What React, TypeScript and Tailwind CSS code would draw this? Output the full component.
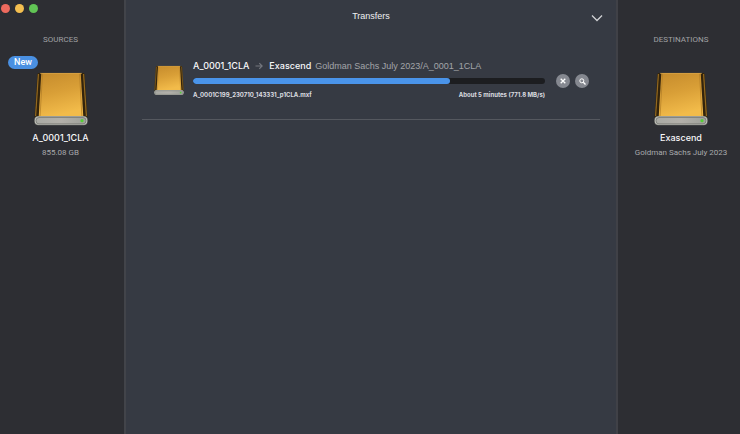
import { useId, useState } from "react";

type Volume = {
  name: string;
  detail: string;
  isNew?: boolean;
};

const sources: Volume[] = [
  { name: "A_0001_1CLA", detail: "855.08 GB", isNew: true },
];

const destinations: Volume[] = [
  { name: "Exascend", detail: "Goldman Sachs July 2023" },
];

const transfers = [
  {
    id: 1,
    source: "A_0001_1CLA",
    destination: "Exascend",
    path: "Goldman Sachs July 2023/A_0001_1CLA",
    file: "A_0001C199_230710_143331_p1CLA.mxf",
    status: "About 5 minutes (771.8 MB/s)",
    progress: 73,
  },
];

function DriveIcon({ className }: { className?: string }) {
  const id = useId();

  return (
    <svg viewBox="0 0 54 54" className={className} aria-hidden="true">
      <defs>
        <linearGradient id={`${id}-face`} x1="0" y1="0" x2="0.25" y2="1">
          <stop offset="0" stopColor="#c58b2c" />
          <stop offset="0.5" stopColor="#d99f37" />
          <stop offset="1" stopColor="#f2bb4a" />
        </linearGradient>
        <linearGradient id={`${id}-front`} x1="0" y1="0" x2="1" y2="0">
          <stop offset="0" stopColor="#a9aaa5" />
          <stop offset="0.5" stopColor="#b3b0aa" />
          <stop offset="1" stopColor="#9fa19b" />
        </linearGradient>
      </defs>
      <path
        d="M5 1h44c1 0 1.500.6 1.600 1.600L53.500 46H.5L3.400 2.600C3.500 1.600 4 1 5 1Z"
        fill="#33240c"
      />
      <path d="M4.400 2 1.600 44" stroke="#94691f" strokeWidth="1.200" />
      <path d="M49.600 2 52.400 44" stroke="#94691f" strokeWidth="1.200" />
      <path d="M7.300 1h39.400L49.300 45H4.700Z" fill={`url(#${id}-face)`} />
      <path d="M8.500 1.500 6.100 44" stroke="#b07c26" strokeWidth="0.700" />
      <path d="M45.500 1.500 47.900 44" stroke="#b07c26" strokeWidth="0.700" />
      <path d="M6 1.400h42" stroke="#dcaa50" strokeWidth="0.600" />
      <rect x="0.300" y="44" width="53.400" height="9.200" rx="4" fill="#74766f" />
      <rect x="0.800" y="44.400" width="52.400" height="8.400" rx="3.800" fill="#c3c4be" />
      <rect
        x="2"
        y="45.500"
        width="50"
        height="6.400"
        rx="3"
        fill={`url(#${id}-front)`}
        stroke="#6d6f69"
        strokeWidth="0.700"
      />
      <circle cx="48" cy="48.700" r="1.600" fill="#55d035" />
    </svg>
  );
}

function VolumeItem({ volume }: { volume: Volume }) {
  return (
    <li className="flex flex-col items-center">
      <div className="flex h-4 w-full items-center pl-2">
        {volume.isNew && (
          <span className="rounded-full bg-[#4a90e2] px-[6px] font-['Roboto','Liberation_Sans',sans-serif] text-[9px] leading-[13px] font-medium text-white">
            New
          </span>
        )}
      </div>
      <DriveIcon className="mt-[2px] h-[54px] w-[54px]" />
      <h3 className="mt-[5px] text-[9px] leading-[14px] font-medium text-[#f8f8fa]">
        {volume.name}
      </h3>
      <p className="font-['Roboto','Liberation_Sans',sans-serif] text-[8px] leading-[15px] whitespace-nowrap text-[#a8a9ac]">
        {volume.detail}
      </p>
    </li>
  );
}

function VolumeList({ title, volumes }: { title: string; volumes: Volume[] }) {
  return (
    <>
      <h2 className="text-center font-['Roboto','Liberation_Sans',sans-serif] text-[8px] leading-[15px] text-[#a0a1a4]">
        {title}
      </h2>
      <ul className="mt-[7px]">
        {volumes.map((volume) => (
          <VolumeItem key={volume.name} volume={volume} />
        ))}
      </ul>
    </>
  );
}

export default function App() {
  const [isOpen, setIsOpen] = useState(true);

  return (
    <div className="flex min-h-screen bg-[#363a43] font-['Inter','Liberation_Sans',sans-serif] select-none">
      {/* Sources */}
      <aside className="w-[126px] shrink-0 border-r-2 border-[#42444a] bg-[#2d2e33] pr-[3px]">
        <div className="flex h-8 gap-[5px] pt-[4px] pl-[1px]">
          <button aria-label="Close" className="h-[9px] w-[9px] rounded-full bg-[#ed6a5e]" />
          <button aria-label="Minimize" className="h-[9px] w-[9px] rounded-full bg-[#f4bf50]" />
          <button aria-label="Zoom" className="h-[9px] w-[9px] rounded-full bg-[#61c455]" />
        </div>
        <VolumeList title="SOURCES" volumes={sources} />
      </aside>

      {/* Transfers */}
      <main className="min-w-0 flex-1 px-4">
        <header className="grid h-[50px] grid-cols-[1fr_auto_1fr] items-start pt-[9px]">
          <h1 className="col-start-2 font-['Liberation_Sans',sans-serif] text-[9px] leading-[14px] text-[#f0f0f2]">
            Transfers
          </h1>
          <button
            aria-label="Toggle transfers"
            aria-expanded={isOpen}
            onClick={() => setIsOpen(!isOpen)}
            className="mt-[5px] -mr-[3px] justify-self-end"
          >
            <svg viewBox="0 0 12 8" className="h-2 w-3" fill="none" stroke="#d0d1d4" strokeWidth="1.300">
              <path d="m1 1.500 5 5 5-5" />
            </svg>
          </button>
        </header>

        {isOpen && (
          <ul>
            {transfers.map((transfer) => (
              <li
                key={transfer.id}
                className="flex items-start border-b border-[#55585f] pt-[9px] pr-[11px] pb-[18px] pl-3"
              >
                <DriveIcon className="mt-[6px] h-[31px] w-[30px] shrink-0" />
                <div className="ml-[9px] min-w-0 flex-1">
                  <div className="flex items-center text-[9px] leading-[14px] whitespace-nowrap">
                    <span className="font-medium text-[#f8f8fa]">{transfer.source}</span>
                    <svg viewBox="0 0 8 8" className="mx-[6px] h-2 w-2" fill="none" stroke="#74777e" strokeWidth="1.200">
                      <path d="M0.500 4h6.500M4.300 1.200 7.100 4 4.300 6.800" />
                    </svg>
                    <span className="font-medium text-[#f8f8fa]">{transfer.destination}</span>
                    <span className="ml-[4px] font-['Liberation_Sans',sans-serif] text-[#a3a5a9]">
                      {transfer.path}
                    </span>
                  </div>
                  <div
                    role="progressbar"
                    aria-label={transfer.file}
                    aria-valuenow={transfer.progress}
                    className="mt-[5px] h-[6px] overflow-hidden rounded-full bg-[#1c1d20]"
                  >
                    <div
                      className="h-full rounded-full bg-[#4a94ea]"
                      style={{ width: `${transfer.progress}%` }}
                    />
                  </div>
                  <div className="mt-[5px] flex justify-between text-[6px] leading-[12px] font-bold whitespace-nowrap text-[#dcdde0]">
                    <span>{transfer.file}</span>
                    <span>{transfer.status}</span>
                  </div>
                </div>
                <div className="mt-[15px] ml-[11px] flex gap-[5px]">
                  <button
                    aria-label="Cancel transfer"
                    className="flex h-[14px] w-[14px] items-center justify-center rounded-full bg-[#858890]"
                  >
                    <svg viewBox="0 0 6 6" className="h-[6px] w-[6px]" stroke="#fff" strokeWidth="1.300">
                      <path d="m0.700.7 4.600 4.600M5.300.7.7 5.300" />
                    </svg>
                  </button>
                  <button
                    aria-label="Show in Finder"
                    className="flex h-[14px] w-[14px] items-center justify-center rounded-full bg-[#858890]"
                  >
                    <svg viewBox="0 0 7 7" className="h-[7px] w-[7px]" fill="none" stroke="#fff" strokeWidth="1">
                      <circle cx="2.800" cy="2.800" r="2" />
                      <path d="m4.300 4.300 2.200 2.200" strokeWidth="1.300" />
                    </svg>
                  </button>
                </div>
              </li>
            ))}
          </ul>
        )}
      </main>

      {/* Destinations */}
      <aside className="w-[124px] shrink-0 border-l-2 border-[#404147] bg-[#2d2e33] pt-8 pl-1">
        <VolumeList title="DESTINATIONS" volumes={destinations} />
      </aside>
    </div>
  );
}
